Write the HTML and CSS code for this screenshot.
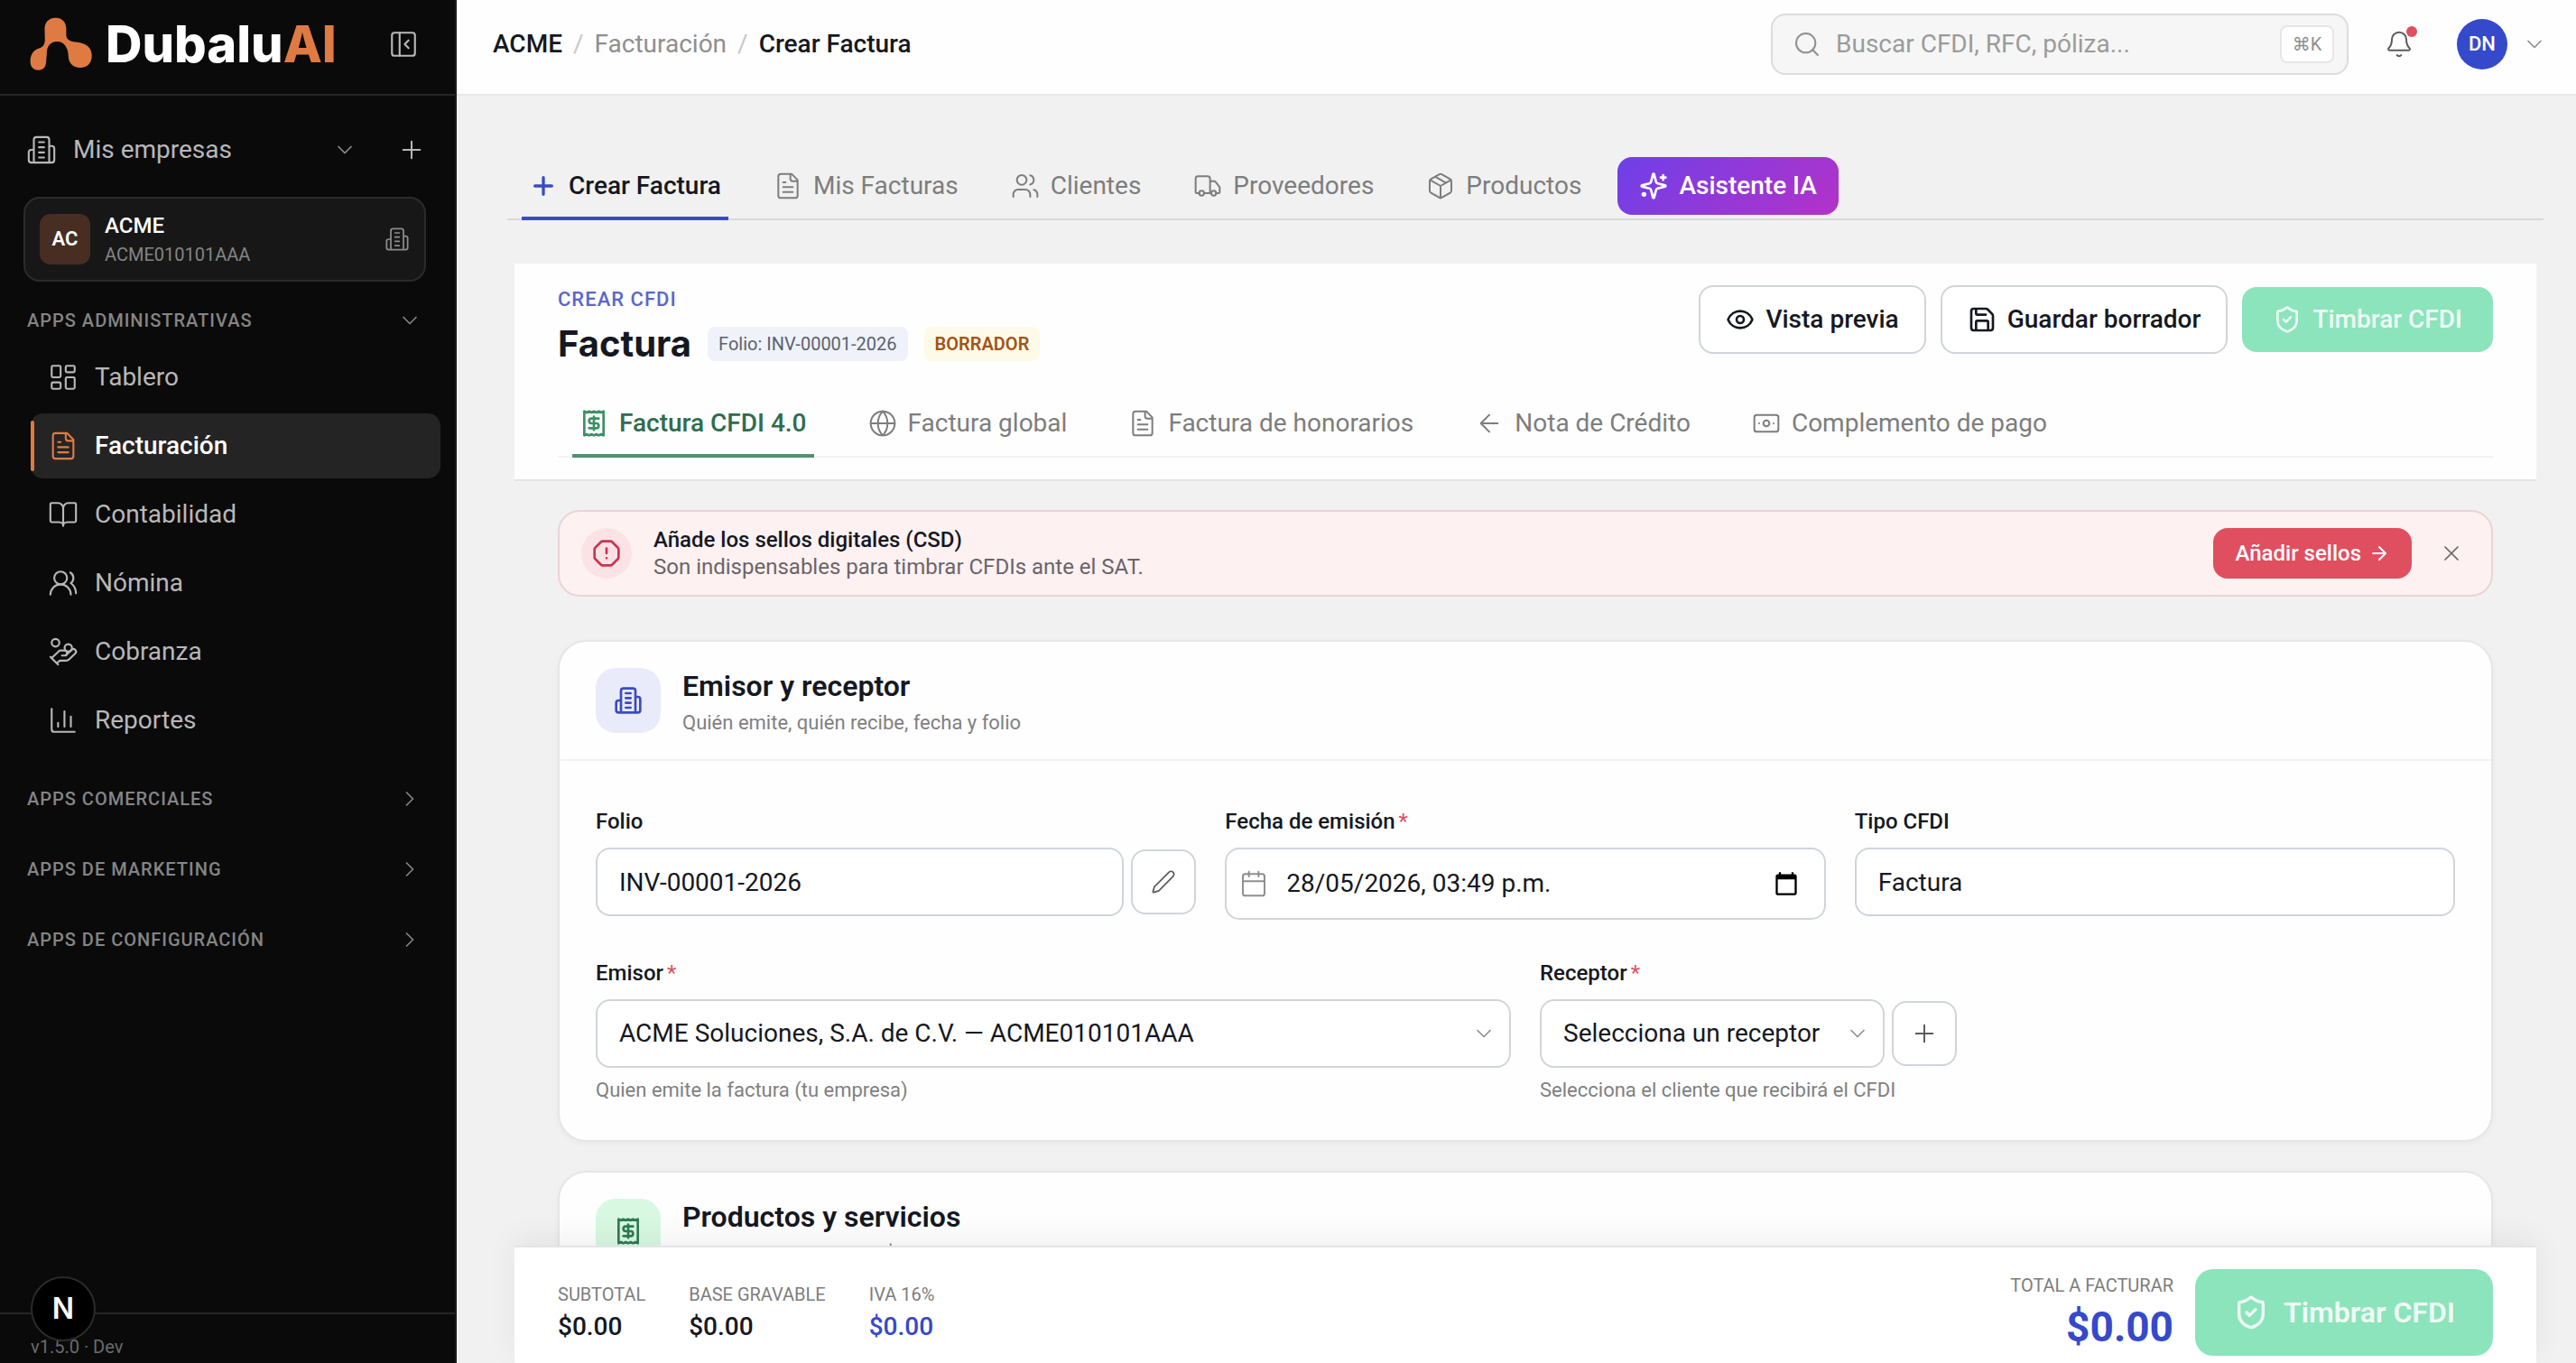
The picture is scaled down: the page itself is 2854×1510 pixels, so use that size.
FILE: index.html
```
<!DOCTYPE html>
<html lang="es">

<head>
  <meta charset="UTF-8" />
  <title>DubaluAI - Crear Factura</title>
  <link rel="stylesheet" href="styles.css">
</head>

<body>

  <!-- Iconos -->
  <svg class="sprite" aria-hidden="true">
    <symbol id="i-panel" viewBox="0 0 24 24"><rect x="3" y="3" width="18" height="18" rx="2" /><path d="M9 3v18M16 15l-3-3 3-3" /></symbol>
    <symbol id="i-building" viewBox="0 0 24 24"><path d="M6 22V4a2 2 0 0 1 2-2h8a2 2 0 0 1 2 2v18ZM6 12H4a2 2 0 0 0-2 2v6a2 2 0 0 0 2 2h2M18 9h2a2 2 0 0 1 2 2v9a2 2 0 0 1-2 2h-2M10 6h4M10 10h4M10 14h4M10 18h4" /></symbol>
    <symbol id="i-down" viewBox="0 0 24 24"><path d="m6 9 6 6 6-6" /></symbol>
    <symbol id="i-right" viewBox="0 0 24 24"><path d="m9 18 6-6-6-6" /></symbol>
    <symbol id="i-plus" viewBox="0 0 24 24"><path d="M5 12h14M12 5v14" /></symbol>
    <symbol id="i-board" viewBox="0 0 24 24"><rect x="3" y="3" width="7" height="9" rx="1" /><rect x="14" y="3" width="7" height="5" rx="1" /><rect x="14" y="12" width="7" height="9" rx="1" /><rect x="3" y="16" width="7" height="5" rx="1" /></symbol>
    <symbol id="i-file" viewBox="0 0 24 24"><path d="M15 2H6a2 2 0 0 0-2 2v16a2 2 0 0 0 2 2h12a2 2 0 0 0 2-2V7ZM14 2v4a2 2 0 0 0 2 2h4M10 9H8M16 13H8M16 17H8" /></symbol>
    <symbol id="i-book" viewBox="0 0 24 24"><path d="M12 7v14M3 18a1 1 0 0 1-1-1V4a1 1 0 0 1 1-1h5a4 4 0 0 1 4 4 4 4 0 0 1 4-4h5a1 1 0 0 1 1 1v13a1 1 0 0 1-1 1h-6a3 3 0 0 0-3 3 3 3 0 0 0-3-3z" /></symbol>
    <symbol id="i-people" viewBox="0 0 24 24"><path d="M18 21a8 8 0 0 0-16 0" /><circle cx="10" cy="8" r="5" /><path d="M22 20c0-3.37-2-6.5-4-8a5 5 0 0 0-.45-8.3" /></symbol>
    <symbol id="i-coins" viewBox="0 0 24 24"><path d="M11 15h2a2 2 0 1 0 0-4h-3c-.6 0-1.1.2-1.4.6L3 17" /><path d="m7 21 1.6-1.4c.3-.4.8-.6 1.4-.6h4c1.1 0 2.1-.4 2.8-1.2l4.6-4.4a2 2 0 0 0-2.75-2.91l-4.2 3.9M2 16l6 6" /><circle cx="16" cy="9" r="2.9" /><circle cx="6" cy="5" r="3" /></symbol>
    <symbol id="i-chart" viewBox="0 0 24 24"><path d="M3 3v16a2 2 0 0 0 2 2h16M8 17v-3M13 17V5M18 17V9" /></symbol>
    <symbol id="i-search" viewBox="0 0 24 24"><circle cx="11" cy="11" r="8" /><path d="m21 21-4.3-4.3" /></symbol>
    <symbol id="i-bell" viewBox="0 0 24 24"><path d="M10.27 21a2 2 0 0 0 3.46 0M3.26 15.33A1 1 0 0 0 4 17h16a1 1 0 0 0 .74-1.67C19.41 13.96 18 12.5 18 8A6 6 0 0 0 6 8c0 4.5-1.41 5.96-2.74 7.33" /></symbol>
    <symbol id="i-users" viewBox="0 0 24 24"><path d="M16 21v-2a4 4 0 0 0-4-4H6a4 4 0 0 0-4 4v2" /><circle cx="9" cy="7" r="4" /><path d="M22 21v-2a4 4 0 0 0-3-3.87M16 3.13a4 4 0 0 1 0 7.75" /></symbol>
    <symbol id="i-truck" viewBox="0 0 24 24"><path d="M14 18V6a2 2 0 0 0-2-2H4a2 2 0 0 0-2 2v11a1 1 0 0 0 1 1h2M15 18H9M19 18h2a1 1 0 0 0 1-1v-3.65a1 1 0 0 0-.22-.62l-3.48-4.35A1 1 0 0 0 17.52 8H14" /><circle cx="17" cy="18" r="2" /><circle cx="7" cy="18" r="2" /></symbol>
    <symbol id="i-box" viewBox="0 0 24 24"><path d="M11 21.73a2 2 0 0 0 2 0l7-4A2 2 0 0 0 21 16V8a2 2 0 0 0-1-1.73l-7-4a2 2 0 0 0-2 0l-7 4A2 2 0 0 0 3 8v8a2 2 0 0 0 1 1.73zM12 22V12M3.3 7l8.7 5 8.7-5M7.5 4.27l9 5.15" /></symbol>
    <symbol id="i-sparkles" viewBox="0 0 24 24"><path d="M9.94 15.5A2 2 0 0 0 8.5 14.06l-6.14-1.58a.5.5 0 0 1 0-.96L8.5 9.94A2 2 0 0 0 9.94 8.5l1.58-6.14a.5.5 0 0 1 .96 0L14.06 8.5a2 2 0 0 0 1.44 1.44l6.14 1.58a.5.5 0 0 1 0 .96l-6.14 1.58a2 2 0 0 0-1.44 1.44l-1.58 6.14a.5.5 0 0 1-.96 0zM20 3v4M22 5h-4" /><circle cx="4" cy="19" r="1" /></symbol>
    <symbol id="i-eye" viewBox="0 0 24 24"><path d="M2.06 12.35a1 1 0 0 1 0-.7 10.75 10.75 0 0 1 19.88 0 1 1 0 0 1 0 .7 10.75 10.75 0 0 1-19.88 0" /><circle cx="12" cy="12" r="3" /></symbol>
    <symbol id="i-save" viewBox="0 0 24 24"><path d="M15.2 3a2 2 0 0 1 1.4.6l3.8 3.8a2 2 0 0 1 .6 1.4V19a2 2 0 0 1-2 2H5a2 2 0 0 1-2-2V5a2 2 0 0 1 2-2zM17 21v-7a1 1 0 0 0-1-1H8a1 1 0 0 0-1 1v7M7 3v4a1 1 0 0 0 1 1h7" /></symbol>
    <symbol id="i-shield" viewBox="0 0 24 24"><path d="M20 13c0 5-3.5 7.5-7.66 8.95a1 1 0 0 1-.67-.01C7.5 20.5 4 18 4 13V6a1 1 0 0 1 1-1c2 0 4.5-1.2 6.24-2.72a1.17 1.17 0 0 1 1.52 0C14.51 3.81 17 5 19 5a1 1 0 0 1 1 1zM9 12l2 2 4-4" /></symbol>
    <symbol id="i-receipt" viewBox="0 0 24 24"><path d="M4 2v20l2-1 2 1 2-1 2 1 2-1 2 1 2-1 2 1V2l-2 1-2-1-2 1-2-1-2 1-2-1-2 1ZM16 8h-6a2 2 0 1 0 0 4h4a2 2 0 1 1 0 4H8M12 17.5v-11" /></symbol>
    <symbol id="i-globe" viewBox="0 0 24 24"><circle cx="12" cy="12" r="10" /><path d="M12 2a14.5 14.5 0 0 0 0 20 14.5 14.5 0 0 0 0-20M2 12h20" /></symbol>
    <symbol id="i-left" viewBox="0 0 24 24"><path d="m12 19-7-7 7-7M19 12H5" /></symbol>
    <symbol id="i-arrow" viewBox="0 0 24 24"><path d="M5 12h14M12 5l7 7-7 7" /></symbol>
    <symbol id="i-cash" viewBox="0 0 24 24"><rect x="2" y="5" width="20" height="14" rx="2" /><circle cx="12" cy="12" r="2.5" /><path d="M6 12h.01M18 12h.01" /></symbol>
    <symbol id="i-alert" viewBox="0 0 24 24"><path d="M12 16h.01M12 8v4M15.31 2a2 2 0 0 1 1.42.59l4.68 4.68A2 2 0 0 1 22 8.69v6.62a2 2 0 0 1-.59 1.42l-4.68 4.68a2 2 0 0 1-1.42.59H8.69a2 2 0 0 1-1.42-.59l-4.68-4.68A2 2 0 0 1 2 15.31V8.69a2 2 0 0 1 .59-1.42l4.68-4.68A2 2 0 0 1 8.69 2z" /></symbol>
    <symbol id="i-close" viewBox="0 0 24 24"><path d="M18 6 6 18M6 6l12 12" /></symbol>
    <symbol id="i-pencil" viewBox="0 0 24 24"><path d="M21.17 6.81a1 1 0 0 0-3.98-3.98L3.84 16.17a2 2 0 0 0-.5.83l-1.32 4.35a.5.5 0 0 0 .62.62l4.35-1.32a2 2 0 0 0 .83-.5z" /></symbol>
    <symbol id="i-calendar" viewBox="0 0 24 24"><path d="M8 2v4M16 2v4M3 10h18" /><rect x="3" y="4" width="18" height="18" rx="2" /></symbol>
    <symbol id="i-picker" viewBox="0 0 24 24"><path d="M20 3h-1V1h-2v2H7V1H5v2H4a2 2 0 0 0-2 2v16c0 1.100.9 2 2 2h16a2 2 0 0 0 2-2V5a2 2 0 0 0-2-2zm0 18H4V8h16z" /></symbol>
  </svg>

  <div class="app">

    <!-- Menú lateral -->
    <aside class="sidebar">
      <div class="brand">
        <a href="#" class="brand-link">
          <svg class="brand-mark" viewBox="100 58 206 178"><path d="M148 97C148 74 163 60 184 60C205 60 219 74 219 97L219 116C219 130 228 136 242 139C275 142 303 150 303 185C303 210 288 224 265 224C240 224 226 208 226 185C226 160 212 138 190 138C166 138 155 155 155 178L153 205C152 222 143 232 128 232C112 232 101 222 101 203C101 180 112 165 130 160C142 157 148 148 149 135Z" /></svg>
          <span class="brand-name">Dubalu<span class="brand-ai">AI</span></span>
        </a>
        <button class="ghost" aria-label="Contraer menú"><svg class="icon icon-lg"><use href="#i-panel" /></svg></button>
      </div>

      <div class="companies">
        <svg class="icon icon-lg"><use href="#i-building" /></svg>
        <span class="companies-title">Mis empresas</span>
        <button class="ghost" aria-label="Ver empresas"><svg class="icon icon-sm"><use href="#i-down" /></svg></button>
        <button class="ghost" aria-label="Nueva empresa"><svg class="icon"><use href="#i-plus" /></svg></button>
      </div>

      <a href="#" class="company">
        <span class="company-avatar">AC</span>
        <span class="company-text">
          <span class="company-name">ACME</span>
          <span class="company-rfc">ACME010101AAA</span>
        </span>
        <svg class="icon company-icon"><use href="#i-building" /></svg>
      </a>

      <button class="section section-open">APPS ADMINISTRATIVAS <svg class="icon icon-sm"><use href="#i-down" /></svg></button>
      <nav class="menu">
        <a href="#" class="menu-item"><svg class="icon icon-lg"><use href="#i-board" /></svg>Tablero</a>
        <a href="#" class="menu-item active"><svg class="icon icon-lg"><use href="#i-file" /></svg>Facturación</a>
        <a href="#" class="menu-item"><svg class="icon icon-lg"><use href="#i-book" /></svg>Contabilidad</a>
        <a href="#" class="menu-item"><svg class="icon icon-lg"><use href="#i-people" /></svg>Nómina</a>
        <a href="#" class="menu-item"><svg class="icon icon-lg"><use href="#i-coins" /></svg>Cobranza</a>
        <a href="#" class="menu-item"><svg class="icon icon-lg"><use href="#i-chart" /></svg>Reportes</a>
      </nav>
      <button class="section">APPS COMERCIALES <svg class="icon icon-sm"><use href="#i-right" /></svg></button>
      <button class="section">APPS DE MARKETING <svg class="icon icon-sm"><use href="#i-right" /></svg></button>
      <button class="section">APPS DE CONFIGURACIÓN <svg class="icon icon-sm"><use href="#i-right" /></svg></button>

      <div class="version">v1.5.0 · Dev</div>
      <button class="devtools" aria-label="Herramientas">N</button>
    </aside>

    <div class="content">

      <!-- Barra superior -->
      <header class="topbar">
        <nav class="crumbs">
          <a href="#" class="crumb-strong">ACME</a>
          <span class="slash">/</span>
          <a href="#">Facturación</a>
          <span class="slash">/</span>
          <span class="crumb-strong">Crear Factura</span>
        </nav>
        <label class="search">
          <svg class="icon"><use href="#i-search" /></svg>
          <input type="search" placeholder="Buscar CFDI, RFC, póliza..." aria-label="Buscar" />
          <kbd>⌘K</kbd>
        </label>
        <button class="ghost bell" aria-label="Notificaciones"><svg class="icon"><use href="#i-bell" /></svg><span class="bell-dot"></span></button>
        <button class="ghost profile" aria-label="Perfil"><span class="profile-avatar">DN</span><svg class="icon icon-sm"><use href="#i-down" /></svg></button>
      </header>

      <main class="page">
        <nav class="tabs">
          <div class="tab-list">
            <a href="#" class="tab active"><svg class="icon"><use href="#i-plus" /></svg>Crear Factura</a>
            <a href="#" class="tab"><svg class="icon"><use href="#i-file" /></svg>Mis Facturas</a>
            <a href="#" class="tab"><svg class="icon"><use href="#i-users" /></svg>Clientes</a>
            <a href="#" class="tab"><svg class="icon"><use href="#i-truck" /></svg>Proveedores</a>
            <a href="#" class="tab"><svg class="icon"><use href="#i-box" /></svg>Productos</a>
          </div>
          <button class="assistant"><svg class="icon"><use href="#i-sparkles" /></svg>Asistente IA</button>
        </nav>

        <div class="invoice">
          <section class="panel">
            <div class="panel-top">
              <div class="panel-title">
                <div class="eyebrow">CREAR CFDI</div>
                <div class="title-row">
                  <h1>Factura</h1>
                  <span class="badge">Folio: INV-00001-2026</span>
                  <span class="badge badge-draft">BORRADOR</span>
                </div>
              </div>
              <div class="actions">
                <button class="btn"><svg class="icon"><use href="#i-eye" /></svg>Vista previa</button>
                <button class="btn"><svg class="icon"><use href="#i-save" /></svg>Guardar borrador</button>
                <button class="btn btn-stamp" disabled><svg class="icon"><use href="#i-shield" /></svg>Timbrar CFDI</button>
              </div>
            </div>
            <nav class="kinds">
              <a href="#" class="tab active"><svg class="icon"><use href="#i-receipt" /></svg>Factura CFDI 4.0</a>
              <a href="#" class="tab"><svg class="icon"><use href="#i-globe" /></svg>Factura global</a>
              <a href="#" class="tab"><svg class="icon"><use href="#i-file" /></svg>Factura de honorarios</a>
              <a href="#" class="tab"><svg class="icon"><use href="#i-left" /></svg>Nota de Crédito</a>
              <a href="#" class="tab"><svg class="icon"><use href="#i-cash" /></svg>Complemento de pago</a>
            </nav>
          </section>

          <div class="body">
            <div class="alert">
              <span class="alert-icon"><svg class="icon"><use href="#i-alert" /></svg></span>
              <div class="alert-text">
                <strong>Añade los sellos digitales (CSD)</strong>
                <span>Son indispensables para timbrar CFDIs ante el SAT.</span>
              </div>
              <button class="btn-seal">Añadir sellos <svg class="icon"><use href="#i-arrow" /></svg></button>
              <button class="ghost alert-close" aria-label="Cerrar"><svg class="icon"><use href="#i-close" /></svg></button>
            </div>

            <!-- Emisor y receptor -->
            <section class="card">
              <div class="card-head">
                <span class="card-icon"><svg class="icon"><use href="#i-building" /></svg></span>
                <div>
                  <h2>Emisor y receptor</h2>
                  <p>Quién emite, quién recibe, fecha y folio</p>
                </div>
              </div>
              <form class="form">
                <div class="row thirds">
                  <div class="field">
                    <label for="folio">Folio</label>
                    <div class="with-button">
                      <input id="folio" type="text" value="INV-00001-2026" />
                      <button type="button" class="square" aria-label="Editar folio"><svg class="icon icon-sm"><use href="#i-pencil" /></svg></button>
                    </div>
                  </div>
                  <div class="field">
                    <label for="fecha">Fecha de emisión<span class="req">*</span></label>
                    <div class="date">
                      <svg class="icon"><use href="#i-calendar" /></svg>
                      <input id="fecha" type="text" value="28/05/2026, 03:49 p.m." />
                      <button type="button" class="ghost" aria-label="Elegir fecha"><svg class="picker"><use href="#i-picker" /></svg></button>
                    </div>
                  </div>
                  <div class="field">
                    <label for="tipo">Tipo CFDI</label>
                    <input id="tipo" type="text" value="Factura" readonly />
                  </div>
                </div>
                <div class="row halves">
                  <div class="field">
                    <label for="emisor">Emisor<span class="req">*</span></label>
                    <div class="select">
                      <select id="emisor">
                        <option>ACME Soluciones, S.A. de C.V. — ACME010101AAA</option>
                      </select>
                      <svg class="icon icon-sm"><use href="#i-down" /></svg>
                    </div>
                    <p class="hint">Quien emite la factura (tu empresa)</p>
                  </div>
                  <div class="field">
                    <label for="receptor">Receptor<span class="req">*</span></label>
                    <div class="with-button">
                      <div class="select">
                        <select id="receptor">
                          <option>Selecciona un receptor</option>
                        </select>
                        <svg class="icon icon-sm"><use href="#i-down" /></svg>
                      </div>
                      <button type="button" class="square" aria-label="Nuevo receptor"><svg class="icon"><use href="#i-plus" /></svg></button>
                    </div>
                    <p class="hint">Selecciona el cliente que recibirá el CFDI</p>
                  </div>
                </div>
              </form>
            </section>

            <!-- Productos -->
            <section class="card">
              <div class="card-head">
                <span class="card-icon green"><svg class="icon"><use href="#i-receipt" /></svg></span>
                <div>
                  <h2>Productos y servicios</h2>
                  <p>0 conceptos · Subtotal $0.00</p>
                </div>
              </div>
            </section>
          </div>

          <!-- Totales -->
          <footer class="totals">
            <dl class="sums">
              <div><dt>SUBTOTAL</dt><dd>$0.00</dd></div>
              <div><dt>BASE GRAVABLE</dt><dd>$0.00</dd></div>
              <div><dt>IVA 16%</dt><dd class="blue">$0.00</dd></div>
            </dl>
            <div class="grand">
              <div class="grand-label">TOTAL A FACTURAR</div>
              <div class="grand-value">$0.00</div>
            </div>
            <button class="btn btn-stamp btn-big" disabled><svg class="icon"><use href="#i-shield" /></svg>Timbrar CFDI</button>
          </footer>
        </div>
      </main>
    </div>
  </div>
</body>

</html>
```
FILE: styles.css
```
* {
  box-sizing: border-box;
}

body {
  margin: 0;
  font-family: Roboto, "Liberation Sans", sans-serif;
  font-size: 28px;
  line-height: 32px;
  color: #151822;
  background: #f1f1f1;
}

a {
  color: inherit;
  text-decoration: none;
}

button,
input,
select {
  font: inherit;
  color: inherit;
}

button {
  cursor: pointer;
}

h1,
h2,
p,
dl,
dd {
  margin: 0;
}

.sprite {
  display: none;
}

.icon {
  flex: none;
  width: 32px;
  height: 32px;
  fill: none;
  stroke: currentColor;
  stroke-width: 1.5;
  stroke-linecap: round;
  stroke-linejoin: round;
}

.icon-lg {
  width: 34px;
  height: 34px;
}

.icon-sm {
  width: 28px;
  height: 28px;
}

.ghost {
  display: flex;
  align-items: center;
  padding: 0;
  border: none;
  background: none;
}

.app {
  display: flex;
  height: 100vh;
  overflow: hidden;
}

/* Menú lateral */
.sidebar {
  position: relative;
  display: flex;
  flex-direction: column;
  flex: none;
  width: 506px;
  background: #0a0a0a;
  border-right: 2px solid #1c1c1c;
  color: #b8b8b8;
}

.brand {
  display: flex;
  align-items: center;
  justify-content: space-between;
  height: 106px;
  padding: 0 40px 6px 33px;
  border-bottom: 2px solid #262626;
}

.brand-link {
  display: flex;
  align-items: center;
  gap: 14px;
}

.brand-mark {
  width: 70px;
  height: 60px;
  fill: #df7b42;
}

.brand-name {
  font-family: Inter, sans-serif;
  font-size: 56px;
  font-weight: 800;
  line-height: 60px;
  color: #fff;
}

.brand-ai {
  color: #df7b42;
}

.companies {
  display: flex;
  align-items: center;
  height: 112px;
  padding: 8px 32px 0 29px;
}

.companies-title {
  flex: 1;
  padding-left: 18px;
}

.companies .ghost + .ghost {
  margin-left: 44px;
}

.companies .icon-sm {
  color: #8c8c8c;
}

.company {
  display: flex;
  align-items: center;
  gap: 16px;
  height: 94px;
  margin: 0 32px 0 26px;
  padding: 0 16px;
  background: #171717;
  border: 2px solid #2b2b2b;
  border-radius: 18px;
}

.company-avatar {
  width: 56px;
  border-radius: 12px;
  background: #472d22;
  color: #fff;
  font-size: 22px;
  font-weight: 600;
  line-height: 56px;
  text-align: center;
}

.company-text {
  flex: 1;
  display: flex;
  flex-direction: column;
  padding-top: 2px;
}

.company-name {
  font-size: 24px;
  font-weight: 500;
  color: #fff;
}

.company-rfc {
  font-size: 20px;
  color: #858585;
}

.company-icon {
  width: 28px;
  height: 28px;
  color: #8c8c8c;
}

.section {
  display: flex;
  align-items: center;
  justify-content: space-between;
  height: 78px;
  padding: 0 36px 0 30px;
  border: none;
  background: none;
  color: #858585;
  font-size: 20px;
  font-weight: 500;
  letter-spacing: 1px;
}

.section-open {
  height: 70px;
  padding-top: 16px;
}

.menu {
  display: flex;
  flex-direction: column;
  gap: 4px;
  margin-bottom: 12px;
  padding: 0 16px 0 34px;
}

.menu-item {
  display: flex;
  align-items: center;
  gap: 18px;
  height: 72px;
  padding-left: 19px;
  border-radius: 14px;
}

.menu-item.active {
  position: relative;
  background: #242424;
  color: #fff;
  font-weight: 500;
}

.menu-item.active .icon {
  color: #df7b42;
}

.menu-item.active::before {
  content: "";
  position: absolute;
  left: 0;
  top: 8px;
  bottom: 8px;
  width: 4px;
  border-radius: 4px;
  background: #df7b42;
}

.version {
  margin-top: auto;
  padding: 20px 34px 2px;
  border-top: 2px solid #262626;
  color: #6b6b6b;
  font-size: 20px;
}

.devtools {
  position: absolute;
  left: 34px;
  bottom: 24px;
  width: 72px;
  height: 72px;
  padding: 0;
  border: 2px solid #2b2b2b;
  border-radius: 50%;
  background: #000;
  color: #fff;
  font-family: Inter, sans-serif;
  font-size: 32px;
  font-weight: 600;
}

/* Barra superior */
.content {
  flex: 1;
  min-width: 0;
  display: flex;
  flex-direction: column;
}

.topbar {
  display: flex;
  align-items: center;
  flex: none;
  height: 106px;
  padding: 0 32px 6px 40px;
  background: #fefefe;
  border-bottom: 2px solid #e8e8e8;
}

.crumbs {
  flex: 1;
  display: flex;
  gap: 12px;
  color: #8f8f8f;
}

.crumb-strong {
  color: #151822;
  font-weight: 500;
}

.slash {
  color: #c8c8c8;
}

.search {
  display: flex;
  align-items: center;
  width: 640px;
  height: 68px;
  padding: 0 14px 0 22px;
  background: #f6f6f6;
  border: 2px solid #dcdcdc;
  border-radius: 16px;
  color: #8f8f8f;
}

.search input {
  flex: 1;
  min-width: 0;
  padding: 0 16px;
  border: none;
  outline: none;
  background: none;
}

.search input::placeholder {
  color: #9b9b9b;
}

.search kbd {
  width: 60px;
  background: #fff;
  border: 2px solid #e6e6e6;
  border-radius: 8px;
  font-family: Roboto, "DejaVu Sans", sans-serif;
  font-size: 20px;
  line-height: 38px;
  text-align: center;
}

.bell {
  position: relative;
  margin: 0 48px 0 40px;
  color: #5c5c5c;
}

.bell-dot {
  position: absolute;
  top: -4px;
  right: -4px;
  width: 12px;
  height: 12px;
  border-radius: 50%;
  background: #e04f60;
}

.profile {
  gap: 16px;
  color: #8f8f8f;
}

.profile-avatar {
  width: 56px;
  border-radius: 50%;
  background: #3549cb;
  color: #fff;
  font-size: 22px;
  font-weight: 500;
  line-height: 56px;
}

/* Pestañas */
.page {
  flex: 1;
  min-height: 0;
  overflow: hidden;
  display: flex;
  flex-direction: column;
  padding: 66px 36px 0 56px;
}

.tabs {
  display: flex;
  align-items: flex-end;
  gap: 32px;
  flex: none;
  margin-bottom: 48px;
  padding-left: 16px;
  border-bottom: 2px solid #dadada;
}

.tab-list {
  display: flex;
  gap: 42px;
}

.tab {
  display: flex;
  align-items: center;
  gap: 12px;
  margin-bottom: -2px;
  padding: 18px 8px;
  border-bottom: 4px solid transparent;
  color: #7d7d7d;
}

.tab.active {
  border-color: #3a4cbf;
  color: #151822;
  font-weight: 500;
}

.tab.active .icon {
  color: #3a4cbf;
  stroke-width: 2.5;
}

.assistant {
  display: flex;
  align-items: center;
  gap: 12px;
  height: 64px;
  margin-bottom: 4px;
  padding: 0 24px;
  border: none;
  border-radius: 16px;
  background: linear-gradient(135deg, #6e40e8, #b432c8);
  color: #fff;
  font-weight: 500;
}

.assistant .icon {
  stroke-width: 2;
}

/* Factura */
.invoice {
  flex: 1;
  min-height: 0;
  display: flex;
  flex-direction: column;
  margin: 0 8px;
}

.panel {
  flex: none;
  padding: 24px 48px;
  background: #fefefe;
  border-bottom: 2px solid #e4e4e6;
}

.panel-top {
  display: flex;
  justify-content: space-between;
  margin-bottom: 30px;
}

.panel-title {
  display: flex;
  flex-direction: column;
  gap: 9px;
}

.eyebrow {
  color: #5b66c9;
  font-size: 22px;
  font-weight: 500;
  letter-spacing: 1px;
}

.title-row {
  display: flex;
  align-items: center;
  gap: 18px;
}

h1 {
  font-family: Inter, sans-serif;
  font-size: 40px;
  font-weight: 700;
  line-height: 48px;
}

.badge {
  padding: 0 12px;
  border-radius: 8px;
  background: #eff2f8;
  color: #5c616d;
  font-size: 20px;
  line-height: 38px;
}

.badge-draft {
  background: #fefae8;
  color: #a35416;
  font-weight: 600;
}

.actions {
  display: flex;
  align-items: center;
  align-self: flex-start;
  gap: 16px;
}

.btn {
  display: flex;
  align-items: center;
  gap: 12px;
  height: 76px;
  padding: 0 28px;
  border: 2px solid #d0d5db;
  border-radius: 16px;
  background: #fff;
  font-weight: 500;
}

.btn .icon {
  stroke-width: 2;
}

.btn-stamp {
  height: 72px;
  padding: 0 34px;
  border: none;
  background: #8ce4bc;
  color: #f0fcf6;
}

.btn-big {
  gap: 16px;
  height: 96px;
  padding: 0 42px;
  border-radius: 20px;
  font-size: 32px;
  font-weight: 600;
}

.btn-big .icon {
  width: 40px;
  height: 40px;
}

.kinds {
  display: flex;
  gap: 52px;
  padding-left: 16px;
  border-bottom: 2px solid #f3f3f3;
}

.kinds .tab.active {
  border-color: #4e9270;
  color: #2f6d4e;
}

.kinds .tab.active .icon {
  color: #3c9065;
  stroke-width: 2;
}

.body {
  flex: 1;
  min-height: 0;
  overflow: hidden;
  padding: 32px 48px 0;
}

/* Aviso */
.alert {
  display: flex;
  align-items: center;
  gap: 24px;
  height: 96px;
  margin-bottom: 48px;
  padding: 0 30px 0 24px;
  background: #fdf1f1;
  border: 2px solid #ecd3d6;
  border-radius: 24px;
  font-size: 24px;
  line-height: 30px;
}

.alert-icon {
  display: flex;
  padding: 12px;
  border-radius: 50%;
  background: #fae2e5;
  color: #c93550;
}

.alert-icon .icon,
.card-icon .icon {
  stroke-width: 2;
}

.alert-text {
  flex: 1;
  display: flex;
  flex-direction: column;
  color: #6b6468;
}

.alert-text strong {
  color: #151822;
  font-weight: 500;
}

.btn-seal {
  display: flex;
  align-items: center;
  gap: 8px;
  height: 56px;
  padding: 0 24px;
  border: none;
  border-radius: 16px;
  background: #e04f60;
  color: #fff;
  font-weight: 500;
}

.btn-seal .icon {
  width: 24px;
  height: 24px;
  stroke-width: 2;
}

.alert-close {
  padding-left: 6px;
  color: #6b6468;
}

.alert-close .icon {
  width: 28px;
  height: 28px;
}

/* Tarjetas */
.card {
  margin-bottom: 32px;
  background: #fefefe;
  border: 2px solid #e6e6e8;
  border-radius: 32px;
  box-shadow: 0 2px 6px rgba(0, 0, 0, 0.04);
}

.card-head {
  display: flex;
  gap: 24px;
  padding: 29px 40px 25px;
  border-bottom: 2px solid #f2f2f3;
}

.card-icon {
  display: flex;
  align-items: center;
  justify-content: center;
  width: 72px;
  height: 72px;
  border-radius: 22px;
  background: #e9ebfa;
  color: #3a4cbf;
}

.card-icon.green {
  background: #d8f8e2;
  color: #2f7a55;
}

h2 {
  font-size: 32px;
  font-weight: 600;
  line-height: 40px;
}

.card-head p,
.hint {
  color: #808080;
  font-size: 22px;
  line-height: 30px;
}

.card-head p {
  padding-top: 6px;
}

.form {
  display: flex;
  flex-direction: column;
  gap: 42px;
  padding: 50px 40px 40px;
}

.row {
  display: grid;
  gap: 32px;
}

.thirds {
  grid-template-columns: repeat(3, 1fr);
}

.halves {
  grid-template-columns: 1fr 1fr;
}

.field > label {
  display: block;
  margin-bottom: 12px;
  font-size: 24px;
  font-weight: 500;
  line-height: 34px;
}

.req {
  margin-left: 4px;
  color: #e04f60;
  font-weight: 400;
}

.field input,
.select select {
  display: block;
  width: 100%;
  height: 76px;
  padding: 0 24px;
  background: #fff;
  border: 2px solid #d0d5db;
  border-radius: 16px;
}

.with-button {
  display: flex;
  align-items: center;
  gap: 8px;
}

.square {
  display: flex;
  align-items: center;
  justify-content: center;
  flex: none;
  width: 72px;
  height: 72px;
  padding: 0;
  background: #fff;
  border: 2px solid #d0d5db;
  border-radius: 16px;
  color: #5c5c5c;
}

.date {
  display: flex;
  align-items: center;
  gap: 20px;
  height: 80px;
  padding: 0 28px 0 14px;
  background: #fff;
  border: 2px solid #d0d5db;
  border-radius: 16px;
}

.date .icon {
  color: #8f8f8f;
}

.date input {
  flex: 1;
  height: auto;
  padding: 0;
  border: none;
}

.picker {
  width: 28px;
  height: 28px;
}

.select {
  position: relative;
}

.select select {
  appearance: none;
  padding-right: 69px;
}

.select .icon {
  position: absolute;
  top: 24px;
  right: 16px;
  color: #8f8f8f;
  pointer-events: none;
}

.hint {
  padding-top: 10px;
}

/* Totales */
.totals {
  position: relative;
  display: flex;
  align-items: center;
  flex: none;
  padding: 24px 48px 8px;
  background: #fff;
  border-top: 2px solid #e4e4e6;
  box-shadow: 0 -8px 32px rgba(0, 0, 0, 0.06);
}

.sums {
  flex: 1;
  display: flex;
  gap: 48px;
}

.sums dt,
.grand-label {
  color: #7d7d7d;
  font-size: 20px;
}

.sums dd {
  font-size: 28px;
  font-weight: 500;
  line-height: 40px;
}

.sums .blue {
  color: #3549cb;
}

.grand {
  margin-right: 24px;
  text-align: right;
}

.grand-value {
  color: #3549cb;
  font-size: 46px;
  font-weight: 700;
  line-height: 60px;
}
```
